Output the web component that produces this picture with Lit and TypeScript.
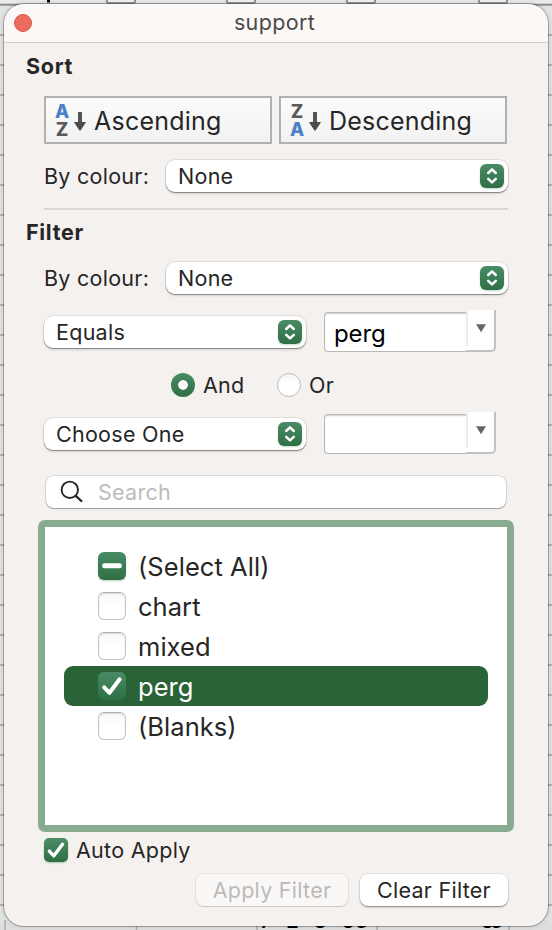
import { LitElement, html, css, svg } from "lit";
import { customElement, property, state } from "lit/decorators.js";
import { classMap } from "lit/directives/class-map.js";

type CheckState = "on" | "off" | "mixed";

@customElement("check-box")
class CheckBox extends LitElement {
  @property() value: CheckState = "off";
  @property({ type: Boolean }) large = false;

  static styles = css`
    :host { display: block; flex: none; }
    .box {
      box-sizing: border-box; width: 24px; height: 24px; border-radius: 5px;
      background: linear-gradient(#f8f8f8, #fff 45%);
      border: 1px solid #c2c2c2; border-top-color: #b0b0b0;
      box-shadow: inset 0 1px 2px #0000001c;
    }
    .large { width: 28px; height: 28px; border-radius: 6px; }
    .filled {
      border: 0; background: linear-gradient(#4a8c66, #2e6f44);
      box-shadow: 0 1px 2px #2e6f4455;
    }
    svg { display: block; width: 100%; height: 100%; fill: none; stroke: #fff; stroke-linecap: round; stroke-linejoin: round; }
  `;

  render() {
    const mark =
      this.value === "on"
        ? svg`<path stroke-width="4" d="M6.2 15.3 L11.5 20.8 L21.6 7.3" />`
        : this.value === "mixed"
          ? svg`<path stroke-width="5" d="M6.6 13.7 H21.4" />`
          : null;
    return html`<div class=${classMap({ box: true, large: this.large, filled: this.value !== "off" })}>
      ${mark ? html`<svg viewBox="0 0 28 28">${mark}</svg>` : null}
    </div>`;
  }
}

@customElement("pop-up")
class PopUp extends LitElement {
  @property() label = "";

  static styles = css`
    :host { display: block; }
    .popup {
      box-sizing: border-box; height: 32px; padding: 0 4px 0 12px; border-radius: 9px; background: #fff;
      display: flex; align-items: center; justify-content: space-between;
      box-shadow: 0 0 0 1px #00000014, 0 1px 1px #00000055, 0 2px 3px #0000001c;
    }
    .knob {
      width: 24px; height: 24px; border-radius: 6px; background: linear-gradient(#4a8c66, #2e6f44);
      box-shadow: 0 1px 2px #2e6f4444;
    }
    svg { display: block; fill: none; stroke: #fff; stroke-width: 2.5; stroke-linecap: round; stroke-linejoin: round; }
  `;

  render() {
    return html`<div class="popup">
      <span>${this.label}</span>
      <div class="knob">
        <svg width="24" height="24" viewBox="0 0 24 24"><path d="M8.2 9 L12 5.4 L15.8 9 M8.2 14.8 L12 18.4 L15.8 14.8" /></svg>
      </div>
    </div>`;
  }
}

@customElement("combo-field")
class ComboField extends LitElement {
  @property() value = "";

  static styles = css`
    :host { display: block; width: 172px; height: 42px; flex: none; }
    .combo { display: flex; height: 42px; }
    .field {
      box-sizing: border-box; width: 142px; height: 40px; margin-top: 2px; padding: 3px 0 0 9px;
      display: flex; align-items: center; background: #fff; color: #000; font-size: 24px; letter-spacing: -0.1px;
      border: 1px solid #b9b8b7; border-width: 1.5px 0 1px 1px; border-radius: 4px 0 0 4px;
      box-shadow: inset 0 2px 2px #0000000d, inset 0 1px 0 #0000001c;
    }
    .arrow {
      box-sizing: border-box; width: 30px; height: 42px; background: #fff; border-radius: 0 0 5px 0;
      border-right: 2px solid #c2c1c0; border-bottom: 2px solid #c2c1c0;
      display: flex; justify-content: center;
    }
    svg { display: block; margin: 14px 8px 0 0; }
    .rule { width: 2px; height: 36px; background: #ececec; margin-right: auto; }
  `;

  render() {
    return html`<div class="combo">
      <div class="field">${this.value}</div>
      <div class="arrow">
        <div class="rule"></div>
        <svg width="10" height="9" viewBox="0 0 10 9"><path fill="#666" d="M0 .3 H10 L5 8.3Z" /></svg>
      </div>
    </div>`;
  }
}

interface Item {
  label: string;
  value: CheckState;
  selected?: boolean;
}

@customElement("app-root")
class AppRoot extends LitElement {
  @state() private items: Item[] = [
    { label: "(Select All)", value: "mixed" },
    { label: "chart", value: "off" },
    { label: "mixed", value: "off" },
    { label: "perg", value: "on", selected: true },
    { label: "(Blanks)", value: "off" },
  ];

  static styles = css`
    :host {
      display: block; position: relative; box-sizing: border-box; width: 552px; height: 930px; overflow: hidden;
      padding: 4px; font-family: Inter, "Liberation Sans", sans-serif; font-size: 21.5px; color: #262626;
      letter-spacing: 0.27px; white-space: nowrap;
      background: repeating-linear-gradient(#e2e4e4 0 4px, #b0b2b2 4px 6px, #e2e4e4 6px 30px);
    }
    .sheet { position: absolute; inset: 0; width: 552px; height: 930px; }
    .sheet text { font-size: 20px; font-weight: 600; letter-spacing: 0; }
    .window {
      position: relative; box-sizing: border-box; width: 544px; height: 922px; border-radius: 20px; background: #f5f1ef;
      box-shadow: 0 0 0 1px #00000040, 0 0 5px #00000030; overflow: hidden;
    }
    .bar {
      box-sizing: border-box; height: 39px; padding: 0 10px; display: grid; grid-template-columns: 18px 1fr 18px;
      align-items: center; background: #fcf8f5; border-bottom: 1px solid #d2cecc; text-align: center; color: #4b4947;
    }
    .title { padding: 0 3px 2px 0; letter-spacing: 0.35px; }
    .close { box-sizing: border-box; width: 18px; height: 18px; border-radius: 50%; background: #ec6a5e; border: 1px solid #d9554a; }
    .body { padding: 0 40px; }
    h2 { margin: 0 0 0 -18px; font-size: 21.5px; line-height: 26px; font-weight: 700; letter-spacing: 0.7px; }
    .sort { margin-top: 10px; }
    .buttons { display: flex; gap: 7px; margin-top: 17px; }
    .sortbtn {
      box-sizing: border-box; width: 228px; height: 48px; border: 2px solid #b0b1b3; padding-left: 8px;
      background: linear-gradient(#fbfbfb, #f2f2f2); display: flex; align-items: center; gap: 8px;
      font-size: 25px; letter-spacing: 0.22px;
    }
    .sortbtn .label { padding-top: 2px; }
    .az { width: 32px; height: 40px; flex: none; display: flex; gap: 4px; }
    .letters { width: 16px; display: flex; flex-direction: column; font-size: 18.5px; font-weight: 800; letter-spacing: 0; line-height: 18px; text-align: center; padding-top: 2px; }
    .blue { color: #4d80c4; }
    .grey { color: #59595b; }
    .row { display: flex; align-items: center; }
    .colour { justify-content: space-between; height: 32px; width: 464px; }
    .wide { width: 342px; }
    .first { margin-top: 16px; }
    .divider { width: 464px; height: 2px; margin: 16px 0 9px; background: #dbd7d5; }
    .second { margin-top: 17px; }
    .cond { width: 452px; height: 42px; justify-content: space-between; }
    .cond pop-up { width: 262px; margin-top: 2px; }
    .c1 { margin-top: 16px; }
    .radios { height: 60px; padding: 6px 0 0 127px; box-sizing: border-box; }
    .radio {
      box-sizing: border-box; width: 24px; height: 24px; border-radius: 50%; margin-right: 8px;
      border: 1px solid #bdbbba; background: linear-gradient(#f4f4f4, #fff 40%);
    }
    .chosen { border: 0; background: radial-gradient(circle, #fff 4.4px, transparent 5.2px), linear-gradient(#4a8c66, #2e6f44); }
    .and { width: 74px; }
    .search {
      box-sizing: border-box; width: 460px; height: 32px; margin: 22px 0 0 2px; border-radius: 8px; background: #fff;
      padding-left: 14px; gap: 14px; color: #bcbcbc; box-shadow: 0 0 0 1px #0000001a, 0 1px 1px #0000004a;
    }
    .list {
      box-sizing: border-box; width: 476px; height: 312px; margin: 12px 0 0 -6px; padding: 19px; border: 7px solid #87ac91;
      border-radius: 7px; background: #fff; font-size: 25.5px; letter-spacing: 0.05px;
    }
    .item { height: 40px; padding-left: 34px; gap: 12px; border-radius: 9px; }
    .item .label { line-height: 30px; padding-top: 2px; }
    .selected { background: #2a6436; color: #fff; }
    .auto { height: 24px; margin-top: 6px; gap: 8px; }
    .actions { width: 464px; margin-top: 12px; justify-content: flex-end; gap: 12px; }
    .action {
      height: 32px; width: 148px; border-radius: 8px; background: #fff; display: flex; align-items: center; justify-content: center;
      box-shadow: 0 0 0 1px #00000012, 0 1px 1px #0000004a, 0 2px 3px #00000018;
    }
    .disabled { width: 152px; background: #faf8f7; color: #bcbab9; box-shadow: 0 0 0 1px #0000000d, 0 1px 1px #00000022; }
  `;

  private sheet() {
    const tabs = [106, 226, 346, 478];
    const columns = [5, 136.5, 257, 377, 509];
    return html`<svg class="sheet" viewBox="0 0 552 930">
      <rect width="552" height="4" fill="#e9e9e9" />
      <path d="M0 4.5H552" stroke="#8b8b8b" stroke-width="1.5" />
      ${tabs.map((x) => svg`<rect x=${x + 1} y="-9" width="28" height="12" rx="1" fill="#f1f1f1" stroke="#929292" stroke-width="2" />`)}
      <path d="M48.5 0V2.5" stroke="#000" stroke-width="3" />
      <rect y="920" width="552" height="10" fill="#dededf" />
      ${columns.map((x) => svg`<path d="M${x} 920V930" stroke="#adaeae" stroke-width="1.5" />`)}
      <text x="260" y="928" textLength="108">7+2+8+83</text>
      <text x="481" y="928" textLength="22">83</text>
    </svg>`;
  }

  private sortIcon(letters: string[]) {
    return html`<div class="az">
      <div class="letters">
        ${letters.map((c) => html`<span class=${c === "A" ? "blue" : "grey"}>${c}</span>`)}
      </div>
      <svg width="12" height="40" viewBox="0 0 12 40">
        <path d="M6 12V24" stroke="#555" stroke-width="4" />
        <path d="M.6 22.5H11.4L6 30.5Z" fill="#4b4b4b" stroke="#4b4b4b" stroke-linejoin="round" />
      </svg>
    </div>`;
  }

  render() {
    return html`
      ${this.sheet()}
      <div class="window">
        <div class="bar"><div class="close"></div><div class="title">support</div></div>
        <div class="body">
          <h2 class="sort">Sort</h2>
          <div class="buttons">
            <div class="sortbtn">${this.sortIcon(["A", "Z"])}<span class="label">Ascending</span></div>
            <div class="sortbtn">${this.sortIcon(["Z", "A"])}<span class="label">Descending</span></div>
          </div>
          <div class="row colour first"><span>By colour:</span><pop-up class="wide" label="None"></pop-up></div>
          <div class="divider"></div>
          <h2>Filter</h2>
          <div class="row colour second"><span>By colour:</span><pop-up class="wide" label="None"></pop-up></div>
          <div class="row cond c1"><pop-up label="Equals"></pop-up><combo-field value="perg"></combo-field></div>
          <div class="row radios">
            <div class="radio chosen"></div><span class="and">And</span>
            <div class="radio"></div><span>Or</span>
          </div>
          <div class="row cond"><pop-up label="Choose One"></pop-up><combo-field></combo-field></div>
          <div class="row search">
            <svg width="24" height="24" viewBox="0 0 24 24" fill="none" stroke="#262626" stroke-linecap="round">
              <circle cx="9.8" cy="9.8" r="8.2" stroke-width="1.9" /><path d="M15.8 15.8L21.3 21" stroke-width="2.4" />
            </svg>
            <span>Search</span>
          </div>
          <div class="list">
            ${this.items.map(
              (i) => html`<div class=${classMap({ row: true, item: true, selected: !!i.selected })}>
                <check-box large .value=${i.value}></check-box><span class="label">${i.label}</span>
              </div>`,
            )}
          </div>
          <div class="row auto"><check-box value="on"></check-box><span>Auto Apply</span></div>
          <div class="row actions">
            <div class="action disabled">Apply Filter</div>
            <div class="action">Clear Filter</div>
          </div>
        </div>
      </div>
    `;
  }
}
